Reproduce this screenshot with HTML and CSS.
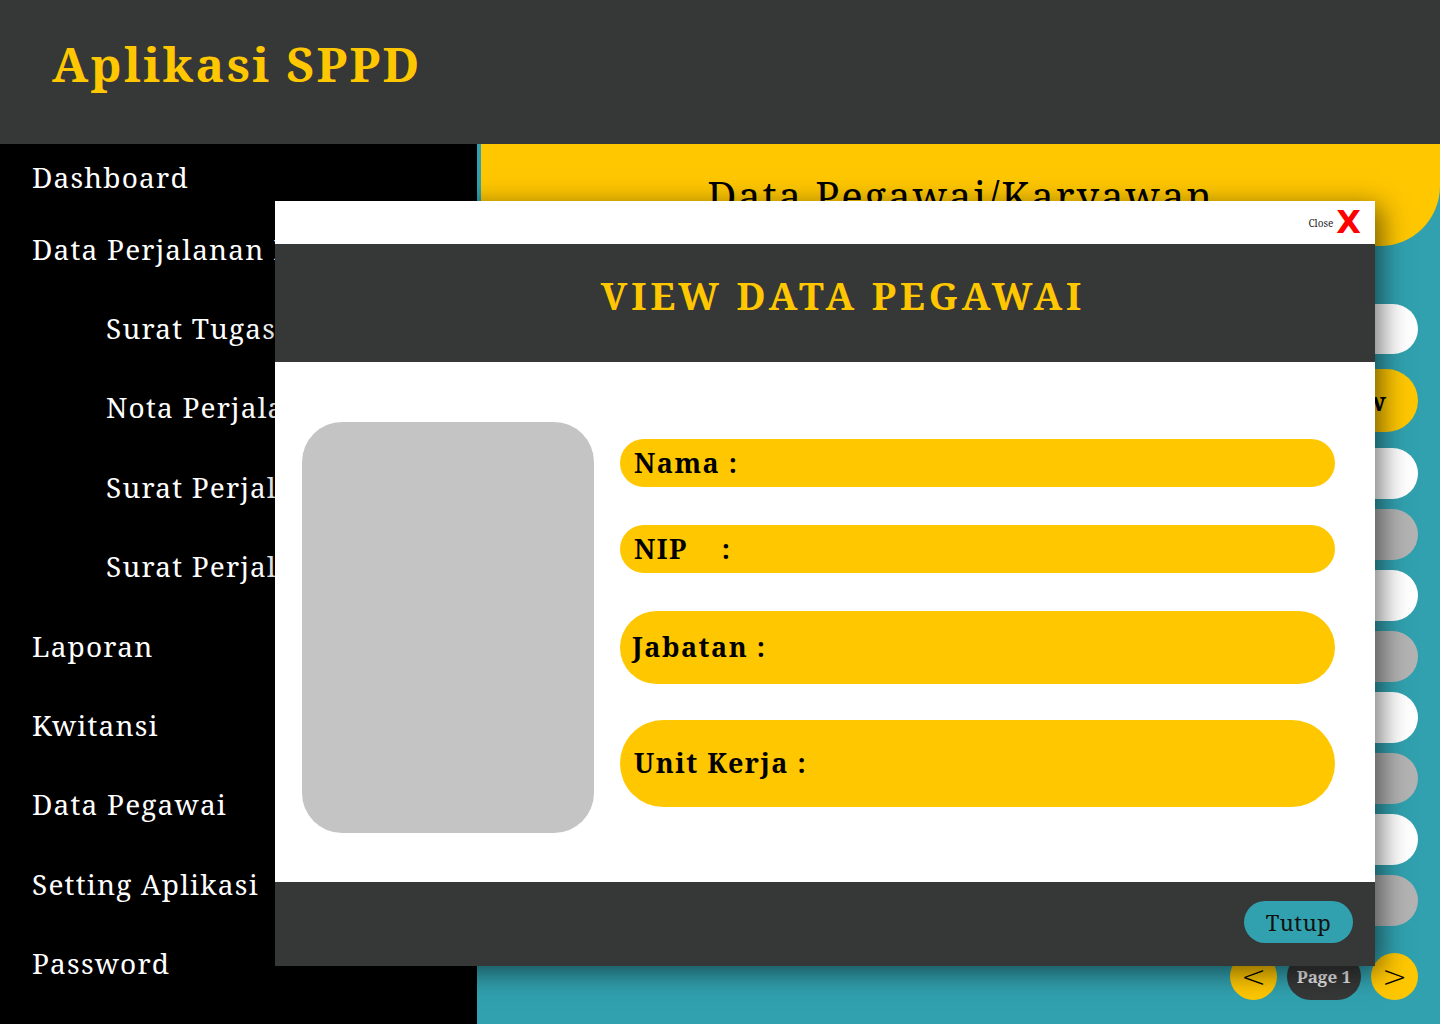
FILE: index.html
```html
<!DOCTYPE html>
<html lang="id">
<head>
<meta charset="utf-8">
<title>Aplikasi SPPD</title>
<link rel="stylesheet" href="styles.css">
</head>
<body>
<div class="app">
  <header class="topbar">
    <h1 class="brand">Aplikasi SPPD</h1>
  </header>
  <div class="layout">
    <nav class="sidebar">
      <a class="nav-item first">Dashboard</a>
      <a class="nav-item">Data Perjalanan Dinas</a>
      <a class="nav-item sub">Surat Tugas</a>
      <a class="nav-item sub">Nota Perjalanan</a>
      <a class="nav-item sub">Surat Perjalanan</a>
      <a class="nav-item sub">Surat Perjalanan</a>
      <a class="nav-item">Laporan</a>
      <a class="nav-item">Kwitansi</a>
      <a class="nav-item">Data Pegawai</a>
      <a class="nav-item">Setting Aplikasi</a>
      <a class="nav-item">Password</a>
    </nav>
    <main class="main">
      <div class="page-title">Data Pegawai/Karyawan</div>
      <div class="content">
        <div class="search"></div>
        <div class="table-head">Preview</div>
        <div class="rows">
          <div class="row light"></div>
          <div class="row dark"></div>
          <div class="row light"></div>
          <div class="row dark"></div>
          <div class="row light"></div>
          <div class="row dark"></div>
          <div class="row light"></div>
          <div class="row dark"></div>
        </div>
        <div class="pager">
          <span class="pg-btn">&lt;</span>
          <span class="pg-num">Page 1</span>
          <span class="pg-btn">&gt;</span>
        </div>
      </div>
    </main>
  </div>

  <div class="modal">
    <div class="modal-top">
      <span class="close-text">Close</span>
      <span class="close-x">X</span>
    </div>
    <div class="modal-head">VIEW DATA PEGAWAI</div>
    <div class="modal-body">
      <div class="photo"></div>
      <div class="fields">
        <div class="field f-nama">Nama :</div>
        <div class="field f-nip">NIP<span class="nip-colon">:</span></div>
        <div class="field f-jab">Jabatan :</div>
        <div class="field f-unit">Unit Kerja :</div>
      </div>
    </div>
    <div class="modal-foot">
      <button class="btn-tutup">Tutup</button>
    </div>
  </div>
</div>
</body>
</html>
```
FILE: styles.css
```css
* { box-sizing: border-box; }
html, body { margin: 0; padding: 0; }
body {
  width: 1440px;
  height: 1024px;
  overflow: hidden;
  font-family: "Noto Serif", "DejaVu Serif", "Liberation Serif", serif;
  background: #000;
}
.app { position: relative; width: 1440px; height: 1024px; }

.topbar {
  height: 144px;
  background: #363737;
  padding: 31px 0 0 52px;
}
.brand {
  margin: 0;
  font-size: 48px;
  font-weight: 700;
  letter-spacing: 2.4px;
  color: #FFC700;
  line-height: 65px;
}

.layout {
  display: flex;
  height: 880px;
}
.sidebar {
  width: 477px;
  background: #000;
  display: flex;
  flex-direction: column;
}
.nav-item {
  display: flex;
  align-items: center;
  height: 79.4px;
  padding-left: 32px;
  color: #fff;
  font-size: 28px;
  letter-spacing: 1.2px;
  white-space: nowrap;
}
.nav-item.first { height: 65px; }
.nav-item.sub { padding-left: 106px; }

.main {
  flex: 1;
  background: #31A1AF;
  display: flex;
  flex-direction: column;
}
.page-title {
  margin-left: 4px;
  height: 102px;
  background: #FFC700;
  border-bottom-right-radius: 60px;
  display: flex;
  justify-content: center;
  padding-top: 26px;
  font-size: 40px;
  letter-spacing: 1.9px;
  color: #000;
  line-height: 1.3;
}
.content {
  padding: 58px 22px 0 40px;
  display: flex;
  flex-direction: column;
}
.search {
  height: 50px;
  background: #fff;
  border-radius: 25px;
}
.table-head {
  margin-top: 15px;
  height: 63px;
  background: #FFC700;
  border-radius: 32px;
  display: flex;
  align-items: center;
  justify-content: flex-end;
  padding-right: 32px;
  font-weight: 700;
  font-size: 26px;
  color: #000;
}
.rows {
  margin-top: 16px;
  display: flex;
  flex-direction: column;
  gap: 10px;
}
.row {
  height: 51px;
  border-radius: 26px;
}
.row.light { background: #fff; }
.row.dark { background: #B3B3B3; }

.pager {
  margin-top: 27px;
  display: flex;
  justify-content: flex-end;
  align-items: center;
  gap: 10px;
}
.pg-btn {
  width: 47px;
  height: 47px;
  border-radius: 50%;
  background: #FFC700;
  display: flex;
  align-items: center;
  justify-content: center;
  font-family: "DejaVu Sans", sans-serif;
  font-weight: 300;
  font-size: 30px;
  color: #000;
}
.pg-num {
  height: 47px;
  width: 74px;
  border-radius: 24px;
  background: #363737;
  color: #e6e6e6;
  font-weight: 700;
  font-size: 17px;
  display: flex;
  align-items: center;
  justify-content: center;
}

/* Modal overlay */
.modal {
  position: absolute;
  left: 275px;
  top: 201px;
  width: 1100px;
  height: 765px;
  display: flex;
  flex-direction: column;
  box-shadow: 6px 6px 26px rgba(0,0,0,0.55);
}
.modal-top {
  height: 43px;
  background: #fff;
  display: flex;
  justify-content: flex-end;
  align-items: center;
  padding-right: 14px;
  gap: 3px;
}
.close-text {
  font-size: 10px;
  color: #222;
}
.close-x {
  font-family: "DejaVu Sans", sans-serif;
  font-weight: 900;
  font-size: 32px;
  line-height: 1;
  color: #FF0000;
  margin-top: -2px;
}
.modal-head {
  height: 118px;
  background: #363737;
  color: #FFC700;
  font-weight: 700;
  font-size: 38px;
  letter-spacing: 3.9px;
  display: flex;
  align-items: center;
  justify-content: center;
  padding-bottom: 16px;
  padding-left: 36px;
}
.modal-body {
  height: 520px;
  background: #fff;
  display: flex;
  padding: 60px 40px 0 27px;
}
.photo {
  width: 292px;
  height: 411px;
  background: #C4C4C4;
  border-radius: 40px;
}
.fields {
  margin-left: 26px;
  flex: 1;
  padding-top: 17px;
  display: flex;
  flex-direction: column;
}
.field {
  background: #FFC700;
  border-radius: 50px;
  display: flex;
  align-items: center;
  padding-left: 14px;
  font-weight: 700;
  font-size: 27px;
  letter-spacing: 1.5px;
  color: #000;
  white-space: pre;
  padding-bottom: 2px;
}
.f-nama { height: 48px; }
.f-nip { height: 48px; margin-top: 38px; }
.nip-colon { margin-left: 34px; }
.f-jab { height: 73px; margin-top: 38px; padding-left: 12px; }
.f-unit { height: 87px; margin-top: 36px; }

.modal-foot {
  flex: 1;
  background: #363737;
  display: flex;
  justify-content: flex-end;
  align-items: flex-start;
  padding: 19px 22px 0 0;
}
.btn-tutup {
  width: 109px;
  height: 42px;
  border: 0;
  border-radius: 21px;
  background: #31A1AF;
  color: #111;
  font-family: "Noto Serif", "DejaVu Serif", serif;
  font-size: 22px;
  letter-spacing: 0.6px;
  padding: 0;
}
```
